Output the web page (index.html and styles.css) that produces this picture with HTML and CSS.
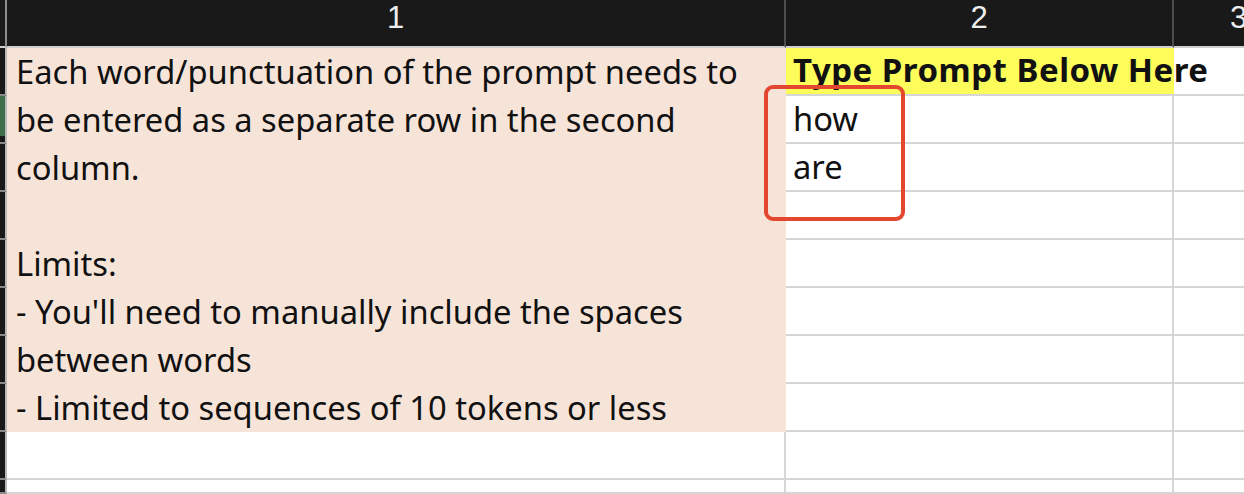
FILE: index.html
```html
<!DOCTYPE html>
<html>
<head>
<meta charset="utf-8">
<link rel="stylesheet" href="styles.css">
</head>
<body>
<div class="sheet">
  <div class="corner"></div>
  <div class="colhead">1</div>
  <div class="colhead">2</div>
  <div class="colhead edge">3</div>

  <div class="rowhead"></div>
  <div class="note">
    <div class="line">Each word/punctuation of the prompt needs to</div>
    <div class="line">be entered as a separate row in the second</div>
    <div class="line">column.</div>
    <div class="line"></div>
    <div class="line">Limits:</div>
    <div class="line">- You'll need to manually include the spaces</div>
    <div class="line">between words</div>
    <div class="line">- Limited to sequences of 10 tokens or less</div>
  </div>
  <div class="cell title"><span>Type Prompt Below Here</span></div>
  <div class="cell c3"></div>

  <div class="rowhead active"></div>
  <div class="cell">how</div>
  <div class="cell c3"></div>

  <div class="rowhead"></div>
  <div class="cell">are</div>
  <div class="cell c3"></div>

  <div class="rowhead"></div>
  <div class="cell"></div>
  <div class="cell c3"></div>

  <div class="rowhead"></div>
  <div class="cell"></div>
  <div class="cell c3"></div>

  <div class="rowhead"></div>
  <div class="cell"></div>
  <div class="cell c3"></div>

  <div class="rowhead"></div>
  <div class="cell"></div>
  <div class="cell c3"></div>

  <div class="rowhead"></div>
  <div class="cell"></div>
  <div class="cell c3"></div>

  <div class="rowhead"></div>
  <div class="cell c1"></div>
  <div class="cell"></div>
  <div class="cell c3"></div>

  <div class="rowhead"></div>
  <div class="cell c1"></div>
  <div class="cell"></div>
  <div class="cell c3"></div>

  <div class="highlight"></div>
</div>
</body>
</html>
```

FILE: styles.css
```css
html, body {
  margin: 0;
  padding: 0;
  background: #ffffff;
  overflow: hidden;
}

.sheet {
  position: relative;
  display: grid;
  grid-template-columns: 7px 779px 388px 70px;
  grid-template-rows: 48px repeat(9, 48px) 14px;
  width: 1244px;
  height: 494px;
  overflow: hidden;
  font-family: "Noto Sans", "Open Sans", sans-serif;
  font-size: 32.7px;
  color: #111111;
}

.corner,
.colhead {
  background: #191919;
  border-bottom: 2px solid #cfcfcf;
  box-sizing: border-box;
}

.corner {
  border-right: 2px solid #8c8c8c;
}

.colhead {
  border-right: 2px solid #4d4d4d;
  color: #eeeeee;
  text-align: center;
  font-family: "Liberation Sans", Arial, sans-serif;
  line-height: 36px;
  font-size: 31px;
}

.colhead.edge {
  border-right: none;
  text-align: left;
  padding-left: 56px;
  overflow: hidden;
}

.rowhead {
  background: #191919;
  border-right: 2px solid #b9b9b9;
  border-bottom: 2px solid #8a8a8a;
  box-sizing: border-box;
}

.rowhead.active {
  background: linear-gradient(#3f6e4b 0, #3f6e4b 40px, #191919 40px);
}

.note {
  grid-column: 2;
  grid-row: 2 / span 8;
  background: #f7e4d9;
  padding-left: 9px;
}

.line {
  height: 48px;
  line-height: 48px;
  white-space: nowrap;
}

.cell {
  border-right: 2px solid #d6d6d6;
  border-bottom: 2px solid #d6d6d6;
  box-sizing: border-box;
  padding-left: 7px;
  line-height: 46px;
  white-space: nowrap;
}

.cell.c3 {
  border-right: none;
}

.title {
  background: #fcfc5b;
  font-weight: 700;
  font-size: 33px;
  letter-spacing: 0.5px;
  line-height: 44px;
  border-right: none;
  position: relative;
  z-index: 1;
}

.highlight {
  position: absolute;
  left: 764px;
  top: 85px;
  width: 141px;
  height: 136px;
  border: 4px solid #e4472f;
  border-radius: 9px;
  box-sizing: border-box;
  z-index: 2;
}
```
